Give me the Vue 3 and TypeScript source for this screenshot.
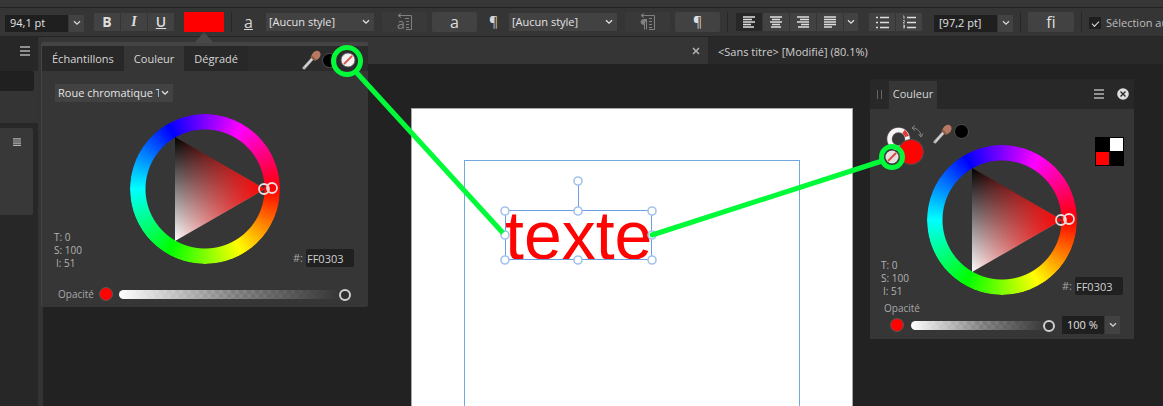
<script setup lang="ts">
import { ref } from 'vue'

const fontSize = ref('94,1 pt')
const leading = ref('[97,2 pt]')
const hex = ref('FF0303')
const opacity = ref(100)
const opacityText = ref('100 %')
const autoSelect = ref(true)

const readings: string[] = ['T: 0', 'S: 100', 'I: 51']

const alignments = [
  { label: 'Aligner à gauche', d: 'M0 1h12M0 3.5h9M0 6h12M0 8.5h8M0 11h11', active: true },
  { label: 'Centrer', d: 'M0 1h12M2 3.5h8M0 6h12M2 8.5h8M1 11h10', active: false },
  { label: 'Aligner à droite', d: 'M0 1h12M3 3.5h9M0 6h12M4 8.5h8M1 11h11', active: false },
  { label: 'Justifier', d: 'M0 1h12M0 3.5h12M0 6h12M0 8.5h12M0 11h8', active: false },
]

const handles = [
  [505, 211], [578, 211], [652, 211],
  [505, 235], [652, 235],
  [505, 260], [578, 260], [652, 260],
  [578, 181],
]
</script>

<template>
  <div class="app">
    <svg class="defs" width="0" height="0" aria-hidden="true">
      <defs>
        <linearGradient id="gray" x1="0" y1="0" x2="0" y2="1">
          <stop offset="0" stop-color="#000" />
          <stop offset="1" stop-color="#fff" />
        </linearGradient>
        <linearGradient id="red" x1="0" y1="0" x2="1" y2="0">
          <stop offset="0" stop-color="#f20808" stop-opacity="0" />
          <stop offset="1" stop-color="#ff0303" stop-opacity="1" />
        </linearGradient>
        <symbol id="triangle" viewBox="0 0 150 150">
          <path d="M45 23V127L135 75Z" fill="url(#gray)" />
          <path d="M45 23V127L135 75Z" fill="url(#red)" />
          <g fill="none" stroke="#eadede" stroke-width="1.8">
            <circle cx="134" cy="75" r="5" />
            <circle cx="142" cy="74" r="5" />
          </g>
        </symbol>
        <symbol id="chevron" viewBox="0 0 8 6">
          <path d="M1 1.2 4 4.2 7 1.2" fill="none" stroke="currentColor" stroke-width="1.3" />
        </symbol>
        <symbol id="menu" viewBox="0 0 10 10">
          <path d="M0 1h10M0 5h10M0 9h10" fill="none" stroke="currentColor" stroke-width="1.7" />
        </symbol>
        <symbol id="dropper" viewBox="0 0 20 20">
          <path d="M2 18 11 8" stroke="#b9b9b9" stroke-width="3" stroke-linecap="round" fill="none" />
          <path d="M3 17 10 9" stroke="#e6e6e6" stroke-width="1" fill="none" />
          <ellipse cx="14" cy="5.500" rx="5.200" ry="4" transform="rotate(-48 14 5.500)" fill="#b87962" />
          <path d="M9.500 6.500 13 10" stroke="#8d5c49" stroke-width="1.800" stroke-linecap="round" />
        </symbol>
        <symbol id="none" viewBox="0 0 16 16">
          <circle cx="8" cy="8" r="7" fill="#f4f1f1" stroke="#555" stroke-width="0.800" />
          <path d="M4 12 12 4" stroke="#d8534f" stroke-width="1.800" />
        </symbol>
      </defs>
    </svg>

    <header class="toolbar">
      <div class="combo">
        <input v-model="fontSize" class="field" type="text" aria-label="Taille de police">
        <button class="drop" type="button" aria-label="Choisir la taille"><svg width="8" height="6"><use href="#chevron" /></svg></button>
      </div>
      <div class="group format">
        <button type="button" aria-label="Gras"><b>B</b></button>
        <button type="button" aria-label="Italique"><i>I</i></button>
        <button type="button" aria-label="Souligné"><u>U</u></button>
      </div>
      <button class="swatch" type="button" aria-label="Couleur du texte"></button>
      <span class="rule"></span>
      <span class="glyph"><u>a</u></span>
      <span class="select">
        <select aria-label="Style de caractère"><option>[Aucun style]</option></select>
        <svg width="8" height="6"><use href="#chevron" /></svg>
      </span>
      <button class="big dim" type="button" disabled aria-label="Réappliquer le style de caractère">
        <svg width="18" height="18" viewBox="0 0 18 18" fill="none" stroke="currentColor">
          <path d="M2 2.500h13.500v14H10M5 .5 2 2.500 5 4.500M9 5.500h4M10 8.500h3M10 11.500h3M10 14.500h3" />
          <text x="1" y="16" font-size="14" stroke="none" fill="currentColor">a</text>
        </svg>
      </button>
      <button class="big char" type="button" aria-label="Panneau Caractère">a</button>
      <span class="glyph pilcrow">¶</span>
      <span class="select">
        <select aria-label="Style de paragraphe"><option>[Aucun style]</option></select>
        <svg width="8" height="6"><use href="#chevron" /></svg>
      </span>
      <button class="big dim" type="button" disabled aria-label="Réappliquer le style de paragraphe">
        <svg width="18" height="18" viewBox="0 0 18 18" fill="none" stroke="currentColor">
          <path d="M2 2.500h13.500v14H10M5 .5 2 2.500 5 4.500M10 5.500h3M10 8.500h3M10 11.500h3M10 14.500h3" />
          <path d="M7.500 6.500H4.500a2.500 2.500 0 0 0 0 5zM5.500 6.500v10M7.500 6.500v10" fill="currentColor" />
        </svg>
      </button>
      <button class="big para" type="button" aria-label="Panneau Paragraphe">¶</button>
      <span class="rule"></span>
      <div class="group aligns">
        <button v-for="a in alignments" :key="a.label" type="button" :class="{ active: a.active }" :aria-label="a.label">
          <svg width="12" height="12" viewBox="0 0 12 12"><path :d="a.d" stroke="currentColor" stroke-width="1.300" /></svg>
        </button>
        <button class="narrow" type="button" aria-label="Autres alignements"><svg width="8" height="6"><use href="#chevron" /></svg></button>
      </div>
      <div class="group lists">
        <button type="button" aria-label="Liste à puces">
          <svg width="13" height="13" viewBox="0 0 13 13" stroke="currentColor" stroke-width="1.300"><path d="M0 1.500h2M0 6.500h2M0 11.500h2M4 1.500h9M4 6.500h9M4 11.500h9" /></svg>
        </button>
        <button type="button" aria-label="Liste numérotée">
          <svg width="13" height="14" viewBox="0 0 13 14" fill="none" stroke="currentColor"><path d="M4 2.500h9M4 7.500h9M4 12.500h9" stroke-width="1.300" /><path d="M0 1h1v3M0 5.500h1.500v1L0 8h2M0 10h1.500v3H0M0 11.500h1.500" stroke-width="0.700" /></svg>
        </button>
      </div>
      <div class="combo leading">
        <input v-model="leading" class="field" type="text" aria-label="Interlignage">
        <button class="drop" type="button" aria-label="Choisir l’interlignage"><svg width="8" height="6"><use href="#chevron" /></svg></button>
      </div>
      <span class="rule"></span>
      <button class="big fi" type="button" aria-label="Ligatures">fi</button>
      <span class="rule"></span>
      <label class="check"><input v-model="autoSelect" type="checkbox"><span>Sélection au</span></label>
    </header>

    <div class="workspace">
      <aside class="side">
        <div class="side-head"><button class="icon" type="button" aria-label="Menu du panneau"><svg width="10" height="10"><use href="#menu" /></svg></button></div>
        <div class="side-tools"><span class="side-field"></span></div>
        <div class="side-card"><button class="icon" type="button" aria-label="Options"><svg width="8" height="8" viewBox="0 0 8 8"><path d="M0 .8h8M0 3h8M0 5.200h8M0 7.400h8" stroke="currentColor" stroke-width="1.200" /></svg></button></div>
      </aside>
      <main class="document">
        <nav class="doc-tabs">
          <div class="doc-current"><button class="icon" type="button" aria-label="Fermer"><svg width="8" height="8" viewBox="0 0 8 8"><path d="M1 1 7 7M7 1 1 7" stroke="currentColor" stroke-width="1.500" /></svg></button></div>
          <a class="doc-other" href="#">&lt;Sans titre&gt; [Modifié] (80.1%)</a>
        </nav>
      </main>
    </div>

    <svg class="canvas" width="1163" height="406" viewBox="0 0 1163 406" role="img" aria-label="Document">
      <rect x="411.5" y="108.5" width="441" height="320" fill="#fff" stroke="#a9a5a2" />
      <rect x="464.5" y="160.500" width="335" height="260" fill="none" stroke="#73a8dc" />
      <text class="artwork" x="505" y="259">texte</text>
      <g stroke="#6c9fdf" fill="none">
        <rect x="505.500" y="210.500" width="146" height="49" />
        <path d="M578.500 181v30" />
      </g>
      <circle v-for="([x, y], i) in handles" :key="i" :cx="x" :cy="y" r="4" fill="#fff" stroke="#a3c3ec" stroke-width="1.600" />
    </svg>

    <section class="popover" aria-label="Couleur du texte">
      <svg class="caret" width="20" height="12" viewBox="0 0 20 12"><path d="M0 12 10 1 20 12Z" fill="#484848" /></svg>
      <div class="pop-tabs">
        <button type="button">Échantillons</button>
        <button type="button" class="current">Couleur</button>
        <button type="button">Dégradé</button>
        <span class="pop-tools">
          <svg width="20" height="20"><use href="#dropper" /></svg>
          <span class="dot"></span>
          <svg class="blank" width="16" height="16"><use href="#none" /></svg>
        </span>
      </div>
      <span class="select mode">
        <select aria-label="Modèle de couleur"><option>Roue chromatique TSI</option></select>
        <svg width="8" height="6"><use href="#chevron" /></svg>
      </span>
      <div class="picker">
        <div class="readings"><span v-for="r in readings" :key="r">{{ r }}</span></div>
        <div class="wheel"><span class="ring"></span><svg width="150" height="150"><use href="#triangle" /></svg></div>
        <label class="hex">#:<input v-model="hex" type="text"></label>
      </div>
      <div class="opacity">
        <label for="op-a">Opacité</label>
        <span class="color"></span>
        <input id="op-a" v-model="opacity" type="range" min="0" max="100">
      </div>
    </section>

    <section class="studio" aria-label="Panneau Couleur">
      <div class="studio-head">
        <svg class="grip" width="5" height="9" viewBox="0 0 5 9"><path d="M.5 0v9M4.500 0v9" stroke="#666" /></svg>
        <button class="studio-tab" type="button">Couleur</button>
        <button class="icon push" type="button" aria-label="Menu"><svg width="10" height="10"><use href="#menu" /></svg></button>
        <button class="icon" type="button" aria-label="Fermer le panneau"><svg width="12" height="12" viewBox="0 0 12 12"><circle cx="6" cy="6" r="5.800" fill="#dedede" /><path d="M3.500 3.500 8.500 8.500M8.500 3.500 3.500 8.500" stroke="#252525" stroke-width="1.300" /></svg></button>
      </div>
      <div class="studio-picker">
        <svg class="paints" width="57" height="60" viewBox="0 0 57 60" fill="none">
          <circle cx="28.500" cy="30" r="9" stroke="#555" stroke-width="6" />
          <circle cx="28.500" cy="30" r="9" stroke="#f7f3f3" stroke-width="4.500" />
          <path d="M33.500 22.500a9 9 0 0 1 3.500 5" stroke="#e03a3a" stroke-width="4" />
          <path d="M43 19c4 0 8 4 8 8M45 16.500 42 19l3 2.500M48.500 25l2.500 3 2-3.500" stroke="#858585" />
          <circle cx="41" cy="43" r="12.500" fill="#ff0303" stroke="#505050" />
          <circle cx="22" cy="48" r="6.500" fill="#e5dfdf" />
          <path d="M18 52 26 44" stroke="#d64843" stroke-width="2" />
        </svg>
        <div class="studio-tools">
          <svg width="20" height="20"><use href="#dropper" /></svg>
          <span class="dot"></span>
        </div>
        <div class="readings"><span v-for="r in readings" :key="r">{{ r }}</span></div>
        <div class="wheel"><span class="ring"></span><svg width="150" height="150"><use href="#triangle" /></svg></div>
        <svg class="chips" width="29" height="29" viewBox="0 0 29 29"><path fill="#000" d="M0 0h29v29H0z" /><path fill="#fff" d="M15 1h13v13H15z" /><path fill="#ff0303" d="M1 15h13v13H1z" /></svg>
        <label class="hex">#:<input v-model="hex" type="text"></label>
      </div>
      <label class="studio-label" for="op-b">Opacité</label>
      <div class="opacity">
        <span class="color"></span>
        <input id="op-b" v-model="opacity" type="range" min="0" max="100">
        <div class="combo percent">
          <input v-model="opacityText" class="field" type="text" aria-label="Valeur d’opacité">
          <button class="drop" type="button" aria-label="Régler l’opacité"><svg width="8" height="6"><use href="#chevron" /></svg></button>
        </div>
      </div>
    </section>

    <svg class="links" width="1163" height="406" viewBox="0 0 1163 406" fill="none" stroke="#02fb39" stroke-width="5" aria-hidden="true">
      <circle cx="347" cy="61" r="13.500" />
      <path d="M356 72 503 233" />
      <circle cx="892" cy="157" r="10.500" />
      <path d="M652 235 882 161" stroke-linecap="round" />
    </svg>
  </div>
</template>

<style>
body {
  margin: 0;
  background: #222;
}
</style>

<style scoped>
.app {
  position: relative;
  display: flex;
  flex-direction: column;
  min-height: 100vh;
  overflow: hidden;
  background: #222;
  color: #d6d6d6;
  font: 11px/14px "Open Sans", "Noto Sans", sans-serif;
}
.app *,
.app *::before {
  box-sizing: border-box;
}
.defs,
.canvas,
.links {
  position: absolute;
  left: 0;
  top: 0;
  pointer-events: none;
}
svg {
  display: block;
  flex: none;
  overflow: visible;
}
button,
input,
select {
  margin: 0;
  padding: 0;
  border: 0;
  border-radius: 0;
  background: none;
  color: inherit;
  font: inherit;
}
button {
  display: flex;
  align-items: center;
  justify-content: center;
  flex: none;
}
.toolbar {
  display: flex;
  align-items: center;
  height: 37px;
  padding: 9px 0 1px 5px;
  border-bottom: 1px solid #242424;
  background: linear-gradient(#363636 7px, #222 7px, #222 8px, #353535 8px);
  white-space: nowrap;
}
.toolbar > * {
  flex: none;
}
.combo {
  display: flex;
  gap: 1px;
  height: 17px;
}
.toolbar .combo {
  margin-top: 2px;
}
.field {
  width: 63px;
  padding-left: 5px;
  background: #1f1f1f;
  color: #e2e2e2;
}
.drop {
  width: 15px;
  background: #424242;
}
.group {
  display: flex;
  gap: 1px;
  height: 18px;
}
.group button {
  width: 26px;
  background: #424242;
  color: #dedede;
}
.group .active {
  background: #272727;
}
.group .narrow {
  width: 14px;
}
.format {
  margin: 0 10px;
  font-size: 14px;
}
.format i {
  font-family: "Liberation Serif", serif;
  font-weight: 700;
}
.format u {
  font-weight: 600;
}
.swatch {
  width: 40px;
  height: 20px;
  background: #ff0000;
}
.rule {
  width: 1px;
  height: 20px;
  margin: 0 7px;
  background: #272727;
}
.glyph {
  width: 27px;
  padding-left: 5px;
  font-size: 16px;
  line-height: 18px;
}
.pilcrow {
  width: 32px;
  padding-left: 12px;
  font-size: 14px;
}
.select {
  position: relative;
  display: block;
  width: 108px;
  height: 18px;
  background: #424242;
  color: #e4e4e4;
}
.select select {
  width: 100%;
  height: 100%;
  padding: 0 20px 0 3px;
  appearance: none;
}
.select svg {
  position: absolute;
  right: 4px;
  top: 6px;
  pointer-events: none;
}
.big {
  width: 45px;
  height: 20px;
  border-radius: 2px;
  background: #424242;
  color: #dedede;
}
.dim {
  margin: 0 5px 0 8px;
  background: #393939;
  color: #808080;
}
.char {
  font-size: 16px;
}
.para {
  font-size: 14px;
}
.aligns {
  margin: 0 11px 0 1px;
}
.leading {
  margin: 0 0 0 12px;
}
.fi {
  width: 46px;
  font-size: 16px;
}
.check {
  display: flex;
  align-items: center;
  gap: 5px;
  margin-top: 1px;
  color: #bdbdbd;
}
.check input {
  display: grid;
  place-items: center;
  width: 12px;
  height: 12px;
  appearance: none;
  background: #1e1e1e;
}
.check input:checked::before {
  content: "";
  width: 7px;
  height: 4px;
  border: solid #e0e0e0;
  border-width: 0 0 1px 1px;
  transform: rotate(-45deg);
}
.workspace {
  display: flex;
  flex: 1;
}
.side {
  flex: none;
  width: 43px;
  border-right: 5px solid #333;
  background: #272727;
}
.icon {
  color: #b4b4b4;
}
.side-head {
  display: flex;
  justify-content: flex-end;
  padding: 9px 8px 15px 0;
}
.side-tools {
  height: 52px;
  background: #343434;
}
.side-field {
  display: block;
  width: 34px;
  height: 20px;
  border-radius: 0 2px 2px 0;
  background: #202020;
}
.side-card {
  display: flex;
  align-items: flex-start;
  width: 33px;
  height: 87px;
  margin-top: 5px;
  padding: 10px 0 0 13px;
  border-radius: 0 2px 2px 0;
  background: #383838;
}
.document {
  flex: 1;
  min-width: 0;
}
.doc-tabs {
  display: flex;
  height: 27px;
  background: #292929;
}
.doc-current {
  display: flex;
  align-items: center;
  justify-content: flex-end;
  width: 665px;
  padding-right: 8px;
  background: #353535;
}
.doc-other {
  padding: 8px 10px;
  color: #d0d0d0;
  text-decoration: none;
  white-space: nowrap;
}
.artwork {
  fill: #ff0303;
  font: 68px "Liberation Sans", Arial, sans-serif;
}
.popover {
  position: absolute;
  left: 41px;
  top: 42px;
  width: 327px;
  padding-bottom: 6px;
  border-top: 4px solid #444;
  border-left: 1px solid #444;
  border-radius: 2px;
  background: #363636;
}
.caret {
  position: absolute;
  left: 152px;
  top: -15px;
}
.pop-tabs {
  display: flex;
  height: 25px;
  background: #2b2b2b;
}
.pop-tabs button {
  padding: 0 10px;
  background: #282828;
}
.pop-tabs .current {
  background: #363636;
}
.pop-tools {
  display: flex;
  align-items: center;
  margin-left: auto;
  padding: 3px 12px 0 0;
}
.dot {
  width: 15px;
  height: 15px;
  border: 1px solid #505050;
  border-radius: 50%;
  background: #000;
}
.blank {
  margin-left: 3px;
}
.mode {
  width: 118px;
  margin: 13px 0 12px 13px;
}
.mode select {
  padding-right: 14px;
}
.picker {
  display: grid;
  grid-template-columns: minmax(0, 1fr) 150px minmax(0, 1fr);
}
.readings {
  display: flex;
  flex-direction: column;
  align-self: end;
  padding-left: 11px;
  color: #b2b2b2;
  font-size: 10px;
  line-height: 13px;
}
.readings span:last-child {
  padding-left: 2px;
}
.picker .readings {
  margin-bottom: -6px;
  padding-left: 12px;
}
.wheel {
  position: relative;
  width: 150px;
  height: 150px;
}
.ring {
  position: absolute;
  inset: 0;
  border-radius: 50%;
  background: conic-gradient(from 90deg, #f00, #ff0, #0f0, #0ff, #00f, #f0f, #f00);
  mask: radial-gradient(circle, transparent 59px, #000 60px);
}
.wheel svg {
  position: relative;
}
.hex {
  display: flex;
  align-items: center;
  align-self: end;
  justify-self: end;
  gap: 3px;
  color: #a6a6a6;
}
.hex input {
  width: 48px;
  height: 18px;
  padding-left: 1px;
  border-radius: 2px;
  background: #202020;
  color: #d0d0d0;
}
.picker .hex {
  margin: 0 14px -3px 0;
}
.opacity {
  display: flex;
  align-items: center;
}
.opacity label,
.studio-label {
  color: #a8a8a8;
  font-size: 10px;
}
.popover .opacity {
  gap: 5px;
  margin-top: 23px;
  padding: 0 17px 0 16px;
}
.color {
  flex: none;
  width: 14px;
  height: 14px;
  border: 1px solid #565656;
  border-radius: 50%;
  background: #ff0303;
}
.opacity input[type="range"] {
  flex: 1;
  min-width: 0;
  height: 12px;
  margin-left: 1px;
  appearance: none;
}
.opacity input[type="range"]::-webkit-slider-runnable-track {
  height: 9px;
  border-radius: 5px;
  background:
    linear-gradient(90deg, #fff, rgba(150, 150, 150, 0.6) 50%, #363636 95%),
    repeating-conic-gradient(#777 0 25%, #555 0 50%) 0 0 / 8px 8px;
}
.opacity input[type="range"]::-webkit-slider-thumb {
  width: 12px;
  height: 12px;
  margin-top: -1px;
  border: 2px solid #cfcfcf;
  border-radius: 50%;
  background: #303030;
  appearance: none;
}
.studio {
  position: absolute;
  left: 870px;
  top: 79px;
  width: 264px;
  padding-bottom: 5px;
  background: #363636;
}
.studio-head {
  display: flex;
  align-items: center;
  height: 30px;
  padding: 0 5px 0 7px;
  background: #282828;
}
.studio-tab {
  align-self: flex-end;
  width: 48px;
  height: 28px;
  margin-left: 7px;
  padding-bottom: 3px;
  background: #363636;
}
.push {
  margin: 0 13px 0 auto;
}
.studio-picker {
  display: grid;
  grid-template-columns: minmax(0, 1fr) 150px minmax(0, 1fr);
  grid-template-rows: 36px 150px;
}
.paints {
  grid-area: 1 / 1 / 3 / 2;
}
.studio-tools {
  display: flex;
  align-items: flex-start;
  grid-area: 1 / 2;
  gap: 1px;
  padding: 15px 0 0 6px;
}
.studio-picker .readings {
  grid-area: 2 / 1;
  margin-bottom: -3px;
}
.studio-picker .wheel {
  grid-area: 2 / 2;
}
.chips {
  grid-area: 1 / 3 / 3 / 4;
  justify-self: end;
  margin: 28px 10px 0 0;
}
.studio-picker .hex {
  grid-area: 2 / 3;
  margin-right: 11px;
}
.studio-label {
  display: block;
  padding: 6px 0 1px 14px;
}
.studio .opacity {
  gap: 7px;
  padding: 0 14px 0 20px;
}
.studio .opacity input[type="range"] {
  margin-left: 0;
}
.percent {
  height: 18px;
}
.percent .field {
  width: 42px;
}
</style>
